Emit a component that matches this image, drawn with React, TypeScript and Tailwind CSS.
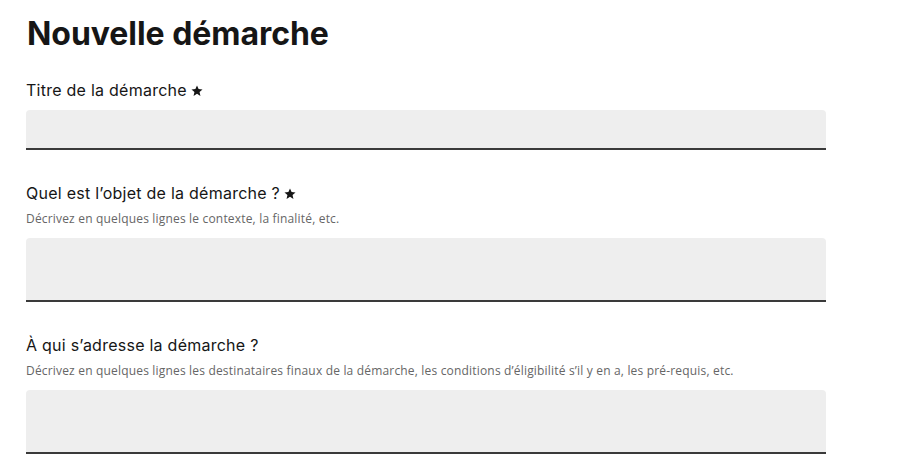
import React from "react";

function Star() {
  return (
    <svg width="12" height="12" viewBox="0 0 24 24" className="inline-block ml-[4px] align-[-1px]" aria-hidden="true">
      <path
        d="M12 1l3.2 7.2 7.8.7-5.9 5.2 1.8 7.7L12 17.7 5.1 21.8l1.8-7.7L1 8.9l7.8-.7z"
        fill="#161616"
      />
    </svg>
  );
}

function Field({
  label,
  required,
  hint,
  tall,
  first,
}: {
  label: string;
  required?: boolean;
  hint?: string;
  tall?: boolean;
  first?: boolean;
}) {
  return (
    <div className={first ? "mt-[24px]" : "mt-[31px]"}>
      <label className="block text-[16px] leading-[24px] tracking-[0.25px] text-[#161616]">
        {label}
        {required && <Star />}
      </label>
      {hint && (
        <p
          className="mt-[4px] text-[12px] leading-[20px] tracking-[0.18px] text-[#666666]"
          style={{ fontFamily: "'Open Sans', sans-serif" }}
        >
          {hint}
        </p>
      )}
      <div
        className={`${hint ? "mt-[9px]" : "mt-[8px]"} w-[800px] ${tall ? "h-[64px]" : "h-[40px]"} bg-[#eeeeee] rounded-t-[4px] border-b-2 border-[#3a3a3a]`}
      />
    </div>
  );
}

export default function App() {
  return (
    <div
      className="min-h-[476px] bg-white pl-[26px] pt-[14px]"
      style={{ fontFamily: "Inter, 'Noto Sans', sans-serif" }}
    >
      <h1 className="text-[32px] leading-[40px] font-bold text-[#161616] pl-[1px] tracking-[-0.05px]">Nouvelle démarche</h1>
      <Field label="Titre de la démarche" required first />
      <Field
        label="Quel est l’objet de la démarche ?"
        required
        hint="Décrivez en quelques lignes le contexte, la finalité, etc."
        tall
      />
      <Field
        label="À qui s’adresse la démarche ?"
        hint="Décrivez en quelques lignes les destinataires finaux de la démarche, les conditions d’éligibilité s’il y en a, les pré-requis, etc."
        tall
      />
    </div>
  );
}
